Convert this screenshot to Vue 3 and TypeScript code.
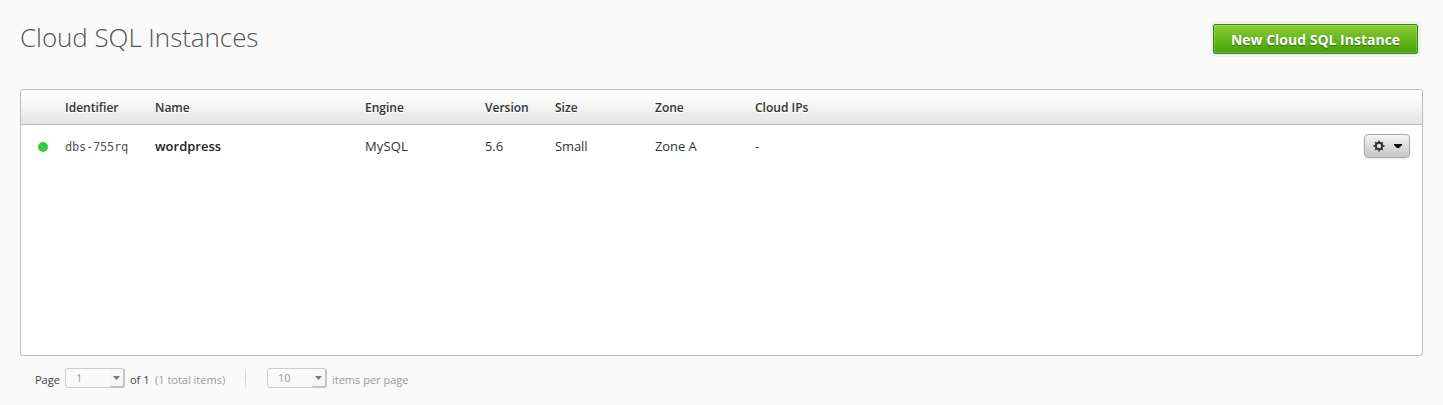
<script setup lang="ts">
interface Instance {
  id: string
  name: string
  engine: string
  version: string
  size: string
  zone: string
  ips: string
}

const columns: string[] = ['', 'Identifier', 'Name', 'Engine', 'Version', 'Size', 'Zone', 'Cloud IPs']

const instances: Instance[] = [
  { id: 'dbs-755rq', name: 'wordpress', engine: 'MySQL', version: '5.6', size: 'Small', zone: 'Zone A', ips: '-' },
]
</script>

<template>
  <main class="page">
    <header class="top">
      <h1>Cloud SQL Instances</h1>
      <button class="create">New Cloud SQL Instance</button>
    </header>

    <section class="grid">
      <div class="row head">
        <span v-for="c in columns" :key="c">{{ c }}</span>
      </div>
      <div v-for="i in instances" :key="i.id" class="row item">
        <span class="status"></span>
        <span class="ident">{{ i.id }}</span>
        <strong>{{ i.name }}</strong>
        <span class="engine">{{ i.engine }}</span>
        <span>{{ i.version }}</span>
        <span>{{ i.size }}</span>
        <span>{{ i.zone }}</span>
        <span>{{ i.ips }}</span>
        <button class="actions" aria-label="Actions">
          <svg class="gear" width="12" height="12" viewBox="0 0 12 12">
            <g stroke="#444" stroke-width="1.800">
              <path d="M6 .5V3M6 9v2.500M.5 6H3M9 6h2.500M2.200 2.200l1.600 1.600M8.200 8.200l1.600 1.600M9.800 2.200L8.200 3.800M3.800 8.200L2.200 9.800" />
            </g>
            <circle cx="6" cy="6" r="3.200" fill="none" stroke="#333" stroke-width="2" />
          </svg>
          <svg class="caret" width="8" height="4" viewBox="0 0 8 4"><path d="M0 0h8v1L5 4H3L0 1z" fill="#000" /></svg>
        </button>
      </div>
    </section>

    <footer class="pager">
      <span class="label">Page</span>
      <span class="select"><span class="value">1</span><span class="arrow"><svg width="7" height="4" viewBox="0 0 7 4"><path d="M0 0h7L3.500 4z" fill="#777" /></svg></span></span>
      <span class="of">of 1</span>
      <span class="total">(1 total items)</span>
      <span class="divider"></span>
      <span class="select"><span class="value">10</span><span class="arrow"><svg width="7" height="4" viewBox="0 0 7 4"><path d="M0 0h7L3.500 4z" fill="#777" /></svg></span></span>
      <span class="per">items per page</span>
    </footer>
  </main>
</template>

<style>
body {
  background: #fafafa;
}
</style>

<style scoped>
.page {
  box-sizing: border-box;
  height: 405px;
  padding: 0 20px;
  font-family: "Open Sans", sans-serif;
  font-size: 13px;
  color: #333;
  overflow: hidden;
}
.top {
  display: flex;
  justify-content: space-between;
  align-items: flex-start;
  height: 89px;
}
h1 {
  margin: 19px 0 0;
  font-size: 26px;
  line-height: 36px;
  font-weight: 300;
  letter-spacing: -0.06px;
  color: #555;
  white-space: nowrap;
}
button {
  font-family: inherit;
  padding: 0;
}
.create {
  box-sizing: border-box;
  width: 205px;
  height: 30px;
  margin: 24px 5px 0 0;
  padding-top: 1px;
  border: 1px solid #3a8503;
  border-radius: 2px;
  background: linear-gradient(#8bcd35, #45a106);
  box-shadow: 0 0 0 3px #f0f0f0, inset 0 0 0 1px rgba(255, 255, 255, 0.22);
  color: #fff;
  font-size: 14px;
  font-weight: 700;
  line-height: 28px;
  text-shadow: 0 1px 1px rgba(0, 0, 0, 0.4);
  white-space: nowrap;
}
.grid {
  box-sizing: border-box;
  height: 267px;
  border: 1px solid #bbb;
  border-radius: 3px;
  background: #fff;
  overflow: hidden;
}
.row {
  display: grid;
  grid-template-columns: 44px 90px 210px 120px 70px 100px 100px 100px 1fr;
  align-items: center;
}
.head {
  height: 34px;
  border-bottom: 1px solid #bbb;
  background: linear-gradient(#fdfdfd 20%, #e4e4e4);
  font-size: 12px;
  font-weight: 600;
  text-shadow: 0 1px 0 #fff;
}
.item {
  height: 42px;
  letter-spacing: -0.1px;
}
.item strong {
  font-weight: 600;
  letter-spacing: 0;
  color: #222;
}
.engine {
  letter-spacing: 0.15px;
}
.status {
  width: 10px;
  height: 10px;
  margin: 2px 0 0 17px;
  border-radius: 50%;
  background: #39cb3f;
}
.ident {
  padding-top: 2px;
  font: 12px "DejaVu Sans Mono", monospace;
  letter-spacing: -0.22px;
  color: #555;
}
.actions {
  box-sizing: border-box;
  justify-self: end;
  display: flex;
  align-items: center;
  width: 46px;
  height: 24px;
  margin-right: 12px;
  padding: 0 7px 0 8px;
  justify-content: space-between;
  border: 1px solid #aaa;
  border-radius: 4px;
  background: linear-gradient(#f4f4f4, #c6c6c6);
  box-shadow: 0 1px 2px rgba(0, 0, 0, 0.1);
}
.pager {
  display: flex;
  align-items: center;
  height: 44px;
  padding-left: 15px;
  font-size: 11px;
  white-space: nowrap;
  color: #999;
}
.label,
.of,
.total,
.per {
  padding-top: 3px;
}
.label {
  width: 30px;
  color: #444;
}
.of {
  width: 25px;
  margin-left: 5px;
  color: #444;
}
.total {
  width: 90px;
}
.divider {
  width: 1px;
  height: 28px;
  margin-right: 21px;
  background: linear-gradient(transparent, #ccc 50%, transparent);
}
.select {
  box-sizing: border-box;
  display: flex;
  justify-content: space-between;
  width: 60px;
  height: 20px;
  padding-left: 10px;
  border: 1px solid #ccc;
  border-radius: 3px;
  line-height: 18px;
}
.arrow {
  box-sizing: border-box;
  display: flex;
  align-items: center;
  justify-content: center;
  width: 15px;
  height: 19px;
  margin-right: -1px;
  border-right: 2px solid #c4c4c4;
  border-bottom: 2px solid #c4c4c4;
  border-radius: 0 0 3px 3px;
  background: #f7f7f7;
}
.per {
  margin-left: 5px;
}
</style>
